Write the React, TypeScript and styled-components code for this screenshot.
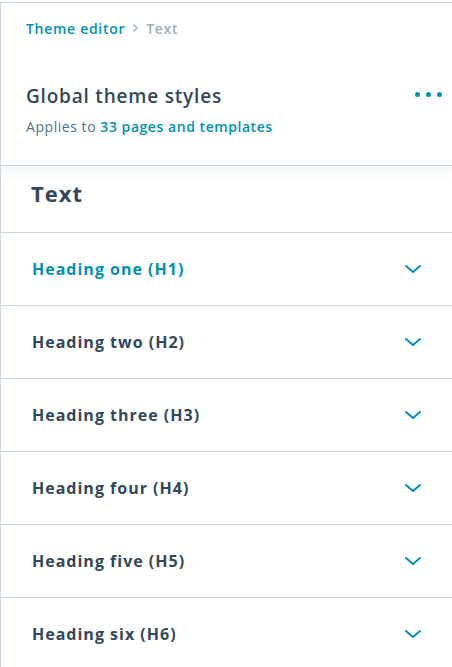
import React from "react";
import styled, { createGlobalStyle } from "styled-components";

const GlobalStyle = createGlobalStyle`
  body {
    margin: 0;
    background: #ffffff;
    font-family: "Open Sans", "Noto Sans", sans-serif;
    color: #33475b;
  }
`;

const Panel = styled.div`
  width: 452px;
  min-height: 667px;
  box-sizing: border-box;
  padding-top: 2px;
`;

const Frame = styled.div`
  border-left: 1px solid #cbd6e2;
  min-height: 665px;
  box-sizing: border-box;
`;

const Header = styled.header`
  border-top: 1px solid #cbd6e2;
  border-bottom: 1px solid #cbd6e2;
  height: 164px;
  box-sizing: border-box;
  padding: 13px 10px 0 25px;
  display: flex;
  flex-direction: column;
`;

const Breadcrumbs = styled.nav`
  display: flex;
  align-items: center;
  gap: 7px;
  font-size: 14px;
  font-weight: 600;
  letter-spacing: 0.7px;
  height: 24px;
`;

const Crumb = styled.span<{ $current?: boolean }>`
  color: ${(p) => (p.$current ? "#99afc4" : "#0091ae")};
`;

const Separator = styled.span`
  display: flex;
  align-items: center;
  color: #99afc4;
`;

const TitleRow = styled.div`
  margin-top: 43px;
  display: flex;
  align-items: center;
  justify-content: space-between;
`;

const Title = styled.h1`
  margin: 0;
  font-size: 19px;
  font-weight: 600;
  letter-spacing: 0.8px;
  line-height: 26px;
  color: #33475b;
`;

const MoreButton = styled.button`
  border: 0;
  background: none;
  padding: 0 0 3px;
  display: flex;
  gap: 6px;
  cursor: pointer;
`;

const Dot = styled.span`
  width: 5px;
  height: 5px;
  border-radius: 50%;
  background: #0091ae;
`;

const Subtitle = styled.p`
  margin: 8px 0 0;
  font-size: 14px;
  letter-spacing: 0.55px;
  line-height: 20px;
  color: #516f90;
`;

const Count = styled.a`
  color: #0091ae;
  font-weight: 600;
  text-decoration: none;
`;

const Section = styled.section`
  background: linear-gradient(#f5f8fa, #ffffff 16px);
`;

const SectionTitle = styled.h2`
  margin: 0;
  height: 66px;
  box-sizing: border-box;
  padding: 12px 0 0 30px;
  font-size: 22px;
  font-weight: 700;
  letter-spacing: 1px;
  line-height: 30px;
  color: #33475b;
`;

const Row = styled.button<{ $active?: boolean }>`
  width: 100%;
  height: 73px;
  box-sizing: border-box;
  border: 0;
  border-top: 1px solid #cbd6e2;
  background: #ffffff;
  padding: 0 30px 0 31px;
  display: flex;
  align-items: center;
  justify-content: space-between;
  font-family: inherit;
  font-size: 16px;
  font-weight: 700;
  letter-spacing: 1px;
  color: ${(p) => (p.$active ? "#0091ae" : "#33475b")};
  cursor: pointer;
  text-align: left;
`;

const Chevron = () => (
  <svg width="18" height="10" viewBox="0 0 18 10" fill="none">
    <path
      d="M2 2 L9 8 L16 2"
      stroke="#0091ae"
      strokeWidth="2"
      strokeLinecap="round"
      strokeLinejoin="round"
    />
  </svg>
);

const headings = [
  "Heading one (H1)",
  "Heading two (H2)",
  "Heading three (H3)",
  "Heading four (H4)",
  "Heading five (H5)",
  "Heading six (H6)",
];

export default function App() {
  return (
    <Panel>
      <GlobalStyle />
      <Frame>
        <Header>
          <Breadcrumbs>
            <Crumb>Theme editor</Crumb>
            <Separator>
              <svg width="7" height="10" viewBox="0 0 7 10" fill="none">
                <path d="M1.5 1.5 L5 5 L1.5 8.5" stroke="#99afc4" strokeWidth="1.3" />
              </svg>
            </Separator>
            <Crumb $current>Text</Crumb>
          </Breadcrumbs>
          <TitleRow>
            <Title>Global theme styles</Title>
            <MoreButton aria-label="More">
              <Dot />
              <Dot />
              <Dot />
            </MoreButton>
          </TitleRow>
          <Subtitle>
            Applies to <Count>33 pages and templates</Count>
          </Subtitle>
        </Header>
        <Section>
          <SectionTitle>Text</SectionTitle>
          {headings.map((h, i) => (
            <Row key={h} $active={i === 0}>
              {h}
              <Chevron />
            </Row>
          ))}
        </Section>
      </Frame>
    </Panel>
  );
}
